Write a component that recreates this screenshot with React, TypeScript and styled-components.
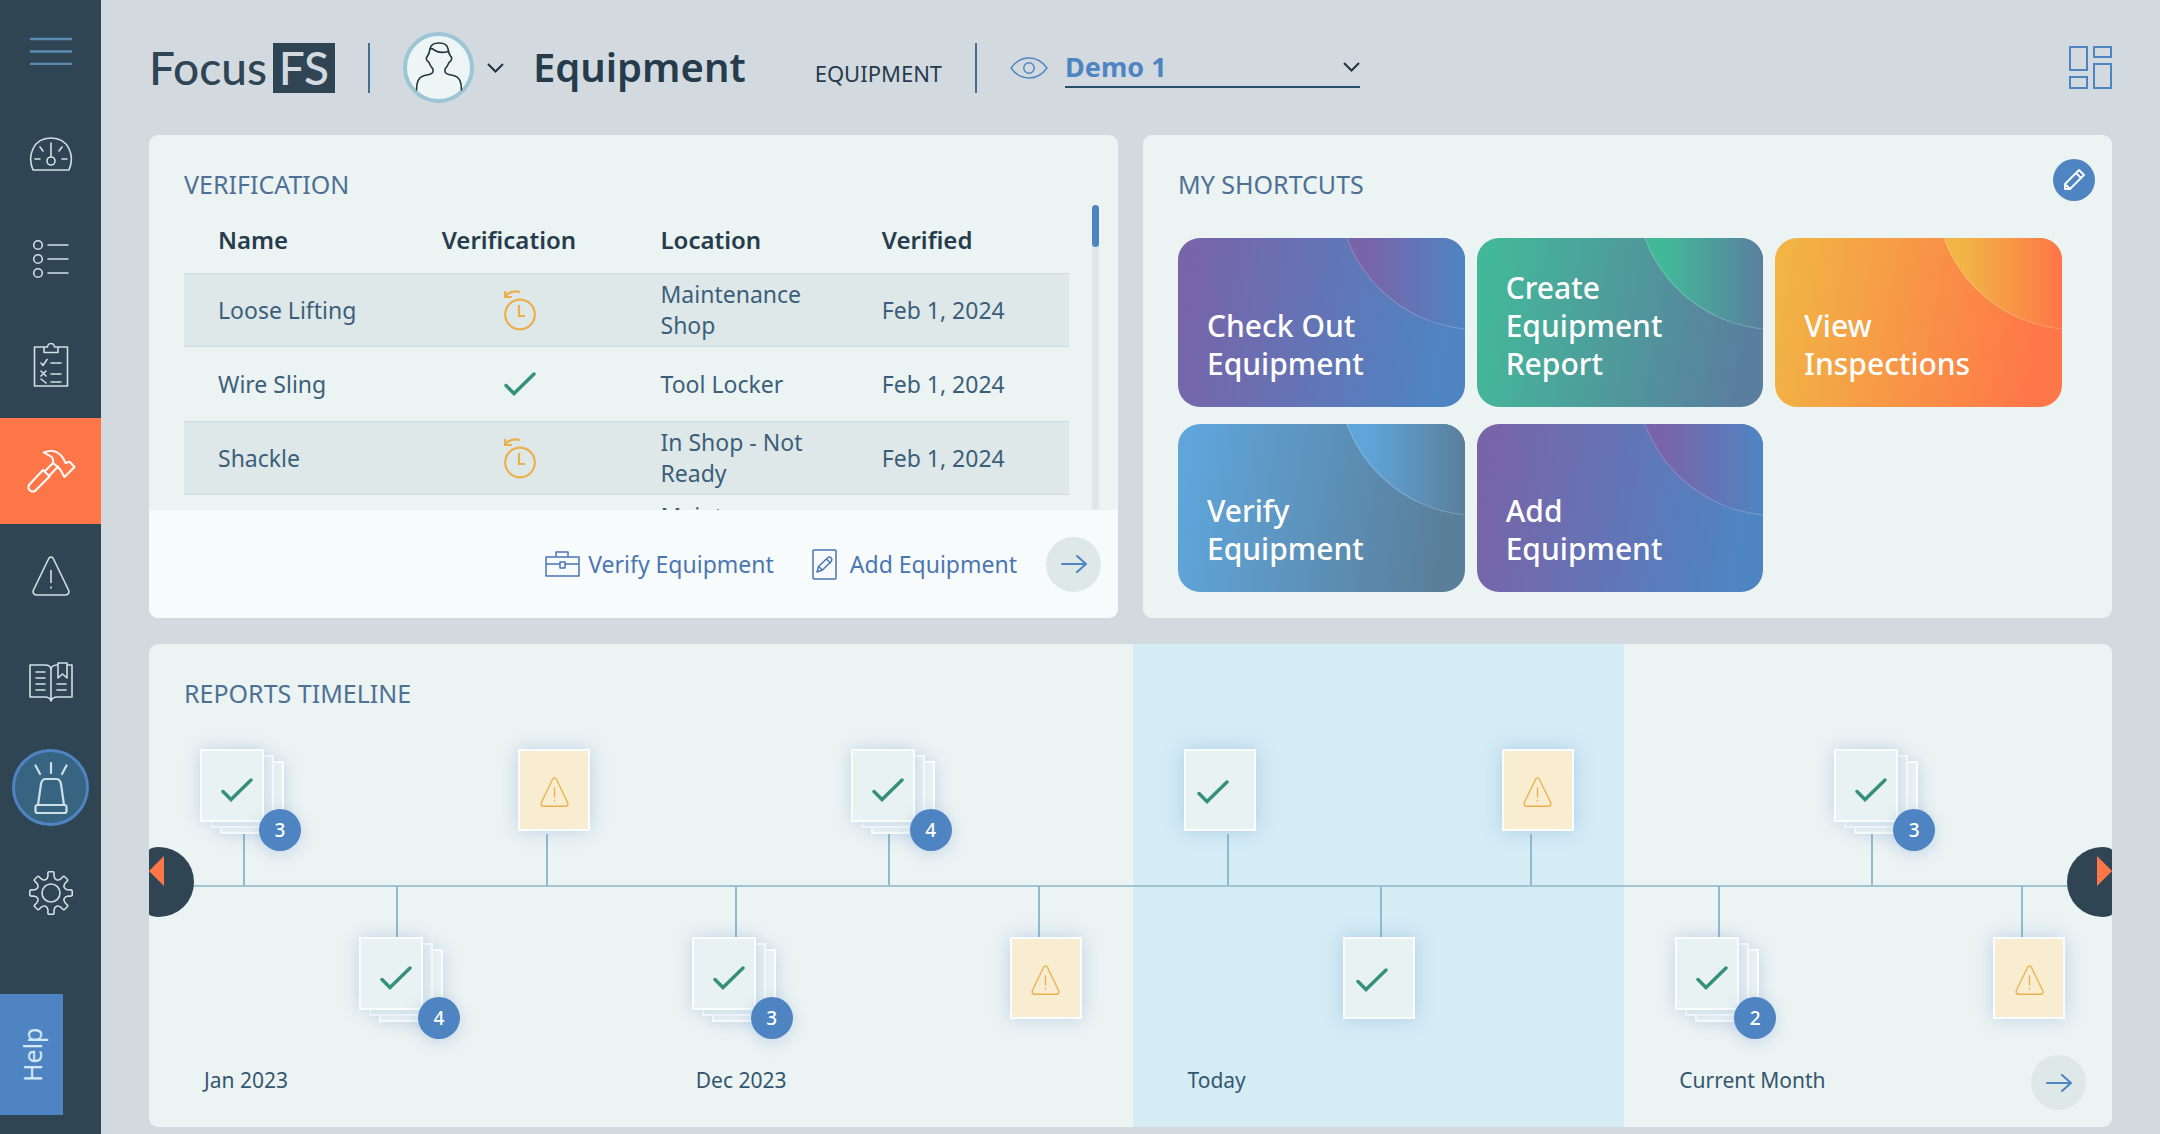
import React from "react";
import styled, { createGlobalStyle, css } from "styled-components";

const color = {
  navy: "#2f4554",
  ink: "#263c4c",
  text: "#3b5f7a",
  heading: "#4d7195",
  blue: "#4f84c2",
  orange: "#ff7748",
  amber: "#ebb04c",
  green: "#35907a",
  page: "#d2dae0",
  card: "#ecf3f3",
  stripe: "#dfe8e9",
  line: "#a0c4d2",
  ice: "#cfdfe8",
};

const GlobalStyle = createGlobalStyle`
  *, *::before, *::after { box-sizing: border-box; }
  body {
    margin: 0;
    background: ${color.page};
    color: ${color.text};
    font-family: "Noto Sans", "Open Sans", sans-serif;
  }
  button, select { font: inherit; color: inherit; }
  button { padding: 0; border: 0; background: none; cursor: pointer; }
  svg { display: block; fill: none; flex: none; }
`;

/* ---------- Shell ---------- */

const Shell = styled.div`
  display: grid;
  grid-template-columns: 101px minmax(0, 1fr);
  min-height: 100vh;
`;

const Sidebar = styled.aside`
  display: flex;
  flex-direction: column;
  background: ${color.navy};
`;

const MenuButton = styled.button`
  display: grid;
  place-items: center;
  height: 101px;
`;

const NavList = styled.nav`
  display: flex;
  flex: 1;
  flex-direction: column;
`;

const NavLink = styled.a<{ $active?: boolean }>`
  display: grid;
  flex: 1;
  place-items: center;
  color: ${(p) => (p.$active ? "#fff" : color.ice)};
  background: ${(p) => (p.$active ? color.orange : "transparent")};
`;

const Beacon = styled.span`
  display: grid;
  place-items: center;
  width: 77px;
  height: 77px;
  border: 3px solid ${color.blue};
  border-radius: 50%;
  background: #376481;
`;

const HelpArea = styled.div`
  height: 188px;
  padding-top: 48px;
`;

const HelpButton = styled.button`
  display: grid;
  place-items: center;
  width: 63px;
  height: 121px;
  background: ${color.blue};
  color: #d3eaf6;
  font-size: 25px;
  line-height: 36px;
  writing-mode: vertical-rl;
  transform: rotate(180deg);
`;

const Main = styled.main`
  display: grid;
  grid-template-rows: 109px repeat(2, minmax(483px, 1fr));
  gap: 26px;
  height: 100vh;
  min-height: 1134px;
  padding: 0 48px 7px;
`;

/* ---------- Header ---------- */

const Header = styled.header`
  display: flex;
  align-items: center;
  padding-top: 26px;
`;

const Logo = styled.div`
  display: flex;
  align-items: center;
  gap: 6px;
  color: ${color.navy};
  font-family: Lato, sans-serif;
  font-size: 46px;
  font-weight: 500;
  line-height: 50px;
`;

const LogoBox = styled.span`
  width: 62px;
  height: 50px;
  background: ${color.navy};
  color: ${color.page};
  text-align: center;
`;

const Divider = styled.span`
  width: 2px;
  height: 50px;
  margin: 0 33px;
  background: #44708f;
`;

const UserButton = styled.button`
  display: flex;
  align-items: center;
  gap: 13px;
`;

const Headline = styled.div`
  display: flex;
  align-items: baseline;
  gap: 69px;
  margin-left: 29px;
  padding-bottom: 2px;
`;

const PageTitle = styled.h1`
  margin: 0;
  color: ${color.ink};
  font-size: 40px;
  font-weight: 600;
  line-height: 54px;
`;

const Crumb = styled.span`
  color: ${color.ink};
  font-size: 22px;
`;

const SiteField = styled.label`
  display: flex;
  align-items: center;
  gap: 17px;
  color: ${color.blue};
`;

const SelectBox = styled.span`
  display: grid;
  width: 295px;
  align-items: center;
  border-bottom: 2px solid #24506a;
  > * { grid-area: 1 / 1; }
  > svg { justify-self: end; pointer-events: none; }
`;

const SiteSelect = styled.select`
  width: 100%;
  height: 38px;
  padding: 0;
  border: 0;
  outline: 0;
  appearance: none;
  background: none;
  font-size: 27px;
  font-weight: 700;
`;

const LayoutButton = styled.button`
  margin-left: auto;
`;

/* ---------- Cards ---------- */

const TopRow = styled.div`
  display: grid;
  grid-template-columns: repeat(2, minmax(0, 1fr));
  gap: 25px;
  min-height: 0;
`;

const Card = styled.section`
  overflow: hidden;
  border-radius: 9px;
  background: ${color.card};
`;

const CardTitle = styled.h2`
  margin: 0;
  color: ${color.heading};
  font-size: 25px;
  font-weight: 400;
  line-height: 34px;
`;

const VerificationCard = styled(Card)`
  display: flex;
  flex-direction: column;
`;

const VerificationBody = styled.div`
  display: flex;
  flex: 1;
  flex-direction: column;
  min-height: 0;
  padding: 32px 19px 0 35px;
  gap: 4px;
`;

const ScrollRow = styled.div`
  display: flex;
  flex: 1;
  gap: 23px;
  min-height: 0;
`;

const TableViewport = styled.div`
  flex: 1;
  height: 100%;
  overflow: hidden;
`;

const ScrollTrack = styled.div`
  width: 7px;
  border-radius: 4px;
  background: ${color.stripe};
`;

const ScrollThumb = styled.div`
  height: 42px;
  border-radius: 4px;
  background: ${color.blue};
`;

const Table = styled.table`
  width: 100%;
  border-collapse: collapse;
  table-layout: fixed;
  font-size: 23px;
  line-height: 31px;
  text-align: left;

  th, td { padding: 0 20px 0 34px; }
  thead tr { height: 68px; }
  th { color: ${color.ink}; font-size: 24px; font-weight: 600; }
  tbody tr { height: 74px; }
  tbody tr:nth-child(odd) {
    background: ${color.stripe};
    box-shadow: inset 0 1px #cfdade, inset 0 -1px #cfdade;
  }
  th:nth-child(2) { padding: 0 14px 0 0; text-align: center; }
  td:nth-child(2) { padding: 0 0 0 8px; }
  td svg { margin: auto; }
`;

const CardFooter = styled.footer`
  display: flex;
  align-items: center;
  justify-content: flex-end;
  height: 108px;
  padding-right: 17px;
  background: #f8fbfc;
  color: #4a76b3;
  font-size: 23px;
`;

const FooterLink = styled.a`
  display: flex;
  align-items: center;
  gap: 8px;
  margin-right: 38px;
  color: inherit;
  text-decoration: none;
  & + & { margin-right: 29px; gap: 13px; }
`;

const RoundButton = styled.button`
  display: grid;
  place-items: center;
  width: 55px;
  height: 55px;
  border-radius: 50%;
  background: ${color.stripe};
  color: ${color.blue};
`;

const ShortcutsCard = styled(Card)`
  padding: 24px 17px 26px 35px;
  display: flex;
  flex-direction: column;
  gap: 37px;
`;

const ShortcutsHead = styled.div`
  display: flex;
  justify-content: space-between;
  align-items: flex-end;
  height: 42px;
`;

const EditButton = styled.button`
  display: grid;
  place-items: center;
  width: 42px;
  height: 42px;
  border-radius: 50%;
  background: ${color.blue};
  color: #fff;
`;

const TileGrid = styled.div`
  display: grid;
  flex: 1;
  grid-template: repeat(2, 1fr) / repeat(3, 1fr);
  gap: 17px 12px;
  margin-right: 33px;
`;

const Tile = styled.button<{ $from: string; $to: string }>`
  position: relative;
  display: flex;
  align-items: flex-end;
  overflow: hidden;
  padding: 0 60px 24px 29px;
  border-radius: 22px;
  background: linear-gradient(100deg, ${(p) => p.$from} 5%, ${(p) => p.$to} 90%);
  color: #fff;
  font-size: 30px;
  font-weight: 500;
  line-height: 38px;
  text-align: left;

  &::before {
    content: "";
    position: absolute;
    top: -188px;
    right: -153px;
    width: 280px;
    height: 280px;
    border: 1px solid rgb(255 255 255 / 22%);
    border-radius: 50%;
    background: linear-gradient(90deg, ${(p) => p.$from} 10%, ${(p) => p.$to} 45%);
  }
`;

/* ---------- Timeline ---------- */

const TimelineCard = styled(Card)`
  display: grid;
  grid-template: minmax(0, 1fr) / minmax(0, 1fr);
  > * { grid-area: 1 / 1; }
  > h2 { margin: 32px 35px; }
`;

const Months = styled.div`
  display: grid;
  grid-template-columns: repeat(4, calc(25% + 1px));
`;

const Month = styled.div<{ $current?: boolean }>`
  display: flex;
  flex-direction: column;
  padding-top: 105px;
  background: ${(p) => (p.$current ? "#d5ecf5" : "transparent")};
`;

const Slots = styled.div`
  display: grid;
  grid-template-columns: repeat(3, 159px);
  height: 274px;
  padding-left: 51px;
  background: linear-gradient(${color.line}, ${color.line}) 0 136px / 100% 2px no-repeat;
`;

const Slot = styled.div<{ $below?: boolean }>`
  display: flex;
  flex-direction: column;
  padding-top: ${(p) => (p.$below ? 137 : 0)}px;
`;

const Stem = styled.span<{ $inset: number }>`
  width: 2px;
  height: 51px;
  margin-left: ${(p) => p.$inset}px;
  background: #8fbccd;
`;

const Report = styled.button`
  position: relative;
  width: 85px;
  height: 85px;
`;

const sheet = css`
  position: absolute;
  border: 2px solid #fafdfd;
  background: #e9f2f2;
`;

const Sheet = styled.span<{ $depth: number }>`
  ${sheet}
  top: ${(p) => p.$depth * 6}px;
  left: ${(p) => p.$depth * 10}px;
  z-index: ${(p) => 3 - p.$depth};
  display: grid;
  place-items: center;
  width: 64px;
  height: 73px;
  padding: 8px 0 0 10px;
  box-shadow: ${(p) => (p.$depth === 1 ? "none" : "0 0 16px rgb(96 140 200 / 30%)")};
`;

const Page = styled.span<{ $warning?: boolean }>`
  ${sheet}
  top: 0;
  left: 0;
  display: flex;
  align-items: center;
  justify-content: ${(p) => (p.$warning ? "center" : "flex-start")};
  width: 72px;
  height: 82px;
  padding: 3px 0 0 ${(p) => (p.$warning ? 0 : 11)}px;
  background: ${(p) => (p.$warning ? "#f8ecd1" : "#e9f2f2")};
  box-shadow: 0 0 18px rgb(90 140 200 / 32%);
`;

const Badge = styled.span`
  position: absolute;
  z-index: 4;
  top: 60px;
  left: 59px;
  width: 42px;
  height: 42px;
  border-radius: 50%;
  background: ${color.blue};
  box-shadow: 0 3px 16px rgb(96 140 200 / 28%);
  color: #fff;
  font-size: 19px;
  font-weight: 500;
  line-height: 42px;
  text-align: center;
`;

const MonthLabel = styled.span`
  margin: 42px 0 0 55px;
  color: #34566f;
  font-size: 21px;
  line-height: 30px;
`;

const Pager = styled.button<{ $side: "left" | "right" }>`
  z-index: 5;
  display: flex;
  justify-content: flex-start;
  justify-self: ${(p) => (p.$side === "left" ? "start" : "end")};
  width: 45px;
  height: 70px;
  margin-top: 203px;
  padding: 9px 0 0 ${(p) => (p.$side === "left" ? 0 : 30)}px;
  border-radius: ${(p) => (p.$side === "left" ? "10px 35px 35px 10px / 3px 35px 35px 3px" : "35px 10px 10px 35px / 35px 3px 3px 35px")};
  background: ${color.navy};
`;

const CornerSlot = styled.div`
  align-self: end;
  justify-self: end;
  margin: 0 26px 17px 0;
`;

/* ---------- Icons ---------- */

const Glyph = ({ w, h = w, sw = 1.6, children }: { w: number; h?: number; sw?: number; children: React.ReactNode }) => (
  <svg width={w} height={h} viewBox={`0 0 ${w} ${h}`} stroke="currentColor" strokeWidth={sw} strokeLinecap="round" strokeLinejoin="round" aria-hidden="true">
    {children}
  </svg>
);

const MenuIcon = () => (
  <svg width="42" height="28" viewBox="0 0 42 28" stroke="#5b8bb2" strokeWidth="2.4" aria-hidden="true">
    <path d="M0 2h42M0 14.5h42M0 27h42" />
  </svg>
);

const GaugeIcon = () => (
  <Glyph w={44} h={34}>
    <path d="M4 33C-2 19 4 1 22 1s24 18 18 32ZM22 6v14M6 22h5M33 22h5M11 10l3 4M33 10l-3 4" />
    <circle cx="22" cy="24" r="4" />
  </Glyph>
);

const ListIcon = () => (
  <Glyph w={36} h={40}>
    <circle cx="5" cy="6" r="4.3" /><circle cx="5" cy="20" r="4.3" /><circle cx="5" cy="34" r="4.3" />
    <path d="M15 6h20M15 20h20M15 34h20" />
  </Glyph>
);

const ClipboardIcon = () => (
  <Glyph w={36} h={44}>
    <path d="M11 4H1.500v39h33V4H25M11 4v5.500h14V4h-3.500a3.500 3.500 0 0 0-7 0ZM8 20l2 2.500 4-6M18 20h10M8 28l5 5m0-5-5 5M18 31h10M8 36l5 4M18 39h10" />
  </Glyph>
);

const HammerIcon = () => (
  <Glyph w={50} h={50} sw={2}>
    <path d="M17.800 6.500C22 4.500 28 4 32 7c3 2 6 6 7.500 10l4-1.300 5 5.300-10 10-4-7-2.700-3L27 17c.500-3 0-5-2-6.500Z" />
    <path d="m27 17-8 8m13-4.500-8.500 9M17 24l6.500 6.500L9 45c-4 2-8-2-6-6Z" />
  </Glyph>
);

const AlertIcon = ({ small }: { small?: boolean }) => (
  <svg width={small ? 29 : 38} height={small ? 30 : 40} viewBox="0 0 38 40" stroke={small ? color.amber : "currentColor"} strokeWidth={small ? 1.8 : 1.6} strokeLinecap="round" strokeLinejoin="round" aria-hidden="true">
    <path d="M16.500 3c1-2.500 4-2.500 5 0L36.500 34c1 2.500 0 5-3 5h-29c-3 0-4-2.500-3-5ZM19 14.500v12M19 31v1" />
  </svg>
);

const BookIcon = () => (
  <Glyph w={44} h={40}>
    <path d="M22 39c-1-3-3-4-6-4H1V3h15c4 0 6 2 6 5 0-3 2-5 6-5h1m9 0h5v32H28c-3 0-5 1-6 4V8M29 1h9v15l-4.500-4-4.500 4ZM7 10h9M7 16h9M7 22h9M7 28h9M28 22h9M28 28h9" />
  </Glyph>
);

const SirenIcon = () => (
  <Glyph w={34} h={54} sw={2.2}>
    <path d="M17 2v10M1.500 4.500 6 13M32.500 4.500 28 13M4 44l3-21c.500-3 2-5 5-5h10c3 0 4.500 2 5 5l3 21" />
    <rect x="1.500" y="44" width="31" height="8" rx="2" />
  </Glyph>
);

const gearPath = (() => {
  const pts: string[] = [];
  for (let i = 0; i < 8; i++) {
    const at = (deg: number, r: number) => {
      const a = ((i * 45 + deg - 90) * Math.PI) / 180;
      return `${(22 + r * Math.cos(a)).toFixed(1)} ${(22 + r * Math.sin(a)).toFixed(1)}`;
    };
    pts.push(`${i ? "L" : "M"}${at(-9, 20)}Q${at(-8, 21.5)} ${at(-5, 21.3)}L${at(5, 21.3)}Q${at(8, 21.5)} ${at(9, 20)}L${at(10, 17.5)}C${at(15, 13.5)} ${at(30, 13.5)} ${at(35, 17.5)}`);
  }
  return pts.join("") + "Z";
})();

const GearIcon = () => (
  <Glyph w={44}>
    <path d={gearPath} />
    <circle cx="22" cy="22" r="9" />
  </Glyph>
);

const AvatarIcon = () => (
  <svg width="71" height="71" viewBox="0 0 71 71" aria-hidden="true">
    <circle cx="35.500" cy="35.500" r="33.500" fill="#eef5f5" stroke="#9cc5d6" strokeWidth="4" />
    <g stroke="#22343f" strokeWidth="1.600" strokeLinecap="round" strokeLinejoin="round">
      <path d="M13.500 58c0-8 1.500-12.500 6.500-14 5-1.500 10-1.500 10-4.500V37c-2-2-3-4-4-6.500-3-2-3.500-5-1.500-6.500 1.500-2 2-4 2.500-7 .500-4 4-6 9-6s8.500 2 9 6c.500 3 1 5 2.500 7 2 1.500 1.500 4.500-1.500 6.500-1 2.500-2 4.500-4 6.500v2.500c0 3 5 3 10 4.500s6.500 6 6.500 14" />
      <path d="M27 17c2-1 3-.500 4 1 4 2.500 9 3 14 1.500" />
    </g>
  </svg>
);

const Chevron = () => (
  <svg width="17" height="10" viewBox="0 0 17 10" stroke="#22343f" strokeWidth="2" aria-hidden="true">
    <path d="m1 1 7.500 7.500L16 1" />
  </svg>
);

const EyeIcon = () => (
  <Glyph w={38} h={22} sw={1.4}>
    <path d="M1 11C6 4 12 1 19 1s13 3 18 10c-5 7-11 10-18 10S6 18 1 11Z" />
    <circle cx="19" cy="11" r="5.200" />
  </Glyph>
);

const LayoutIcon = () => (
  <svg width="43" height="43" viewBox="0 0 43 43" stroke={color.blue} strokeWidth="2" aria-hidden="true">
    <path d="M1 1h17v23H1ZM25 1h17v10H25ZM1 31h17v11H1ZM25 18h17v24H25Z" />
  </svg>
);

const ClockBackIcon = () => (
  <svg width="32" height="42" viewBox="0 0 32 42" stroke={color.amber} strokeWidth="2.200" aria-hidden="true">
    <circle cx="16" cy="25.500" r="14.800" />
    <path d="M15 16v11h6M1 2v6h7M1.500 7C5 3 10 1.500 16 3" />
  </svg>
);

const CheckIcon = () => (
  <svg width="32" height="24" viewBox="0 0 32 24" stroke={color.green} strokeWidth="3.400" strokeLinecap="round" aria-hidden="true">
    <path d="m2 13.500 8 8L30 2" />
  </svg>
);

const CaseIcon = () => (
  <Glyph w={35} h={26} sw={1.5}>
    <path d="M1 6h33v19H1ZM11 6V1h12v5M1 13h14m5 0h14M15 11h5v6h-5Z" />
  </Glyph>
);

const FormIcon = () => (
  <Glyph w={25} h={31} sw={1.5}>
    <rect x="1" y="1" width="23" height="29" rx="1" />
    <path d="m5 23 1.500-5.500L16 8.500c2-1.500 5 1 3.500 3.500L10.500 21ZM14.500 10l4 4M6.500 17.500l4 3.500" />
  </Glyph>
);

const PencilIcon = () => (
  <Glyph w={22} h={22} sw={1.8}>
    <path d="M2 20v-5L16 1l5 5L7 20ZM13 4l5 5M2.500 15.500 7 20" />
  </Glyph>
);

const ArrowIcon = () => (
  <Glyph w={26} h={18} sw={2}>
    <path d="M1 9h24M16 1l9 8-9 8" />
  </Glyph>
);

const Triangle = ({ side }: { side: "left" | "right" }) => (
  <svg width="15" height="30" viewBox="0 0 15 30" aria-hidden="true">
    <path d={side === "left" ? "M15 0v30L0 15Z" : "M0 0v30l15-15Z"} fill={color.orange} />
  </svg>
);

/* ---------- Data ---------- */

const navItems = [
  { label: "Dashboard", icon: <GaugeIcon /> },
  { label: "Tasks", icon: <ListIcon /> },
  { label: "Forms", icon: <ClipboardIcon /> },
  { label: "Equipment", icon: <HammerIcon />, active: true },
  { label: "Hazards", icon: <AlertIcon /> },
  { label: "Library", icon: <BookIcon /> },
  { label: "Emergency", icon: <Beacon><SirenIcon /></Beacon> },
  { label: "Settings", icon: <GearIcon /> },
];

const rows = [
  { name: "Loose Lifting", ok: false, location: "Maintenance Shop", date: "Feb 1, 2024" },
  { name: "Wire Sling", ok: true, location: "Tool Locker", date: "Feb 1, 2024" },
  { name: "Shackle", ok: false, location: "In Shop - Not Ready", date: "Feb 1, 2024" },
  { name: "", ok: null, location: "Maintenance Shop", date: "" },
];

const purple = ["#7864a9", "#4f84c2"];
const shortcuts = [
  { label: "Check Out Equipment", tone: purple },
  { label: "Create Equipment Report", tone: ["#43b899", "#5a7f9e"] },
  { label: "View Inspections", tone: ["#f1b445", "#ff7648"] },
  { label: "Verify Equipment", tone: ["#5fa5da", "#5a7f9b"] },
  { label: "Add Equipment", tone: purple },
];

type Kind = "ok" | "warning" | number;
const months: { label: string; current?: boolean; reports: Kind[] }[] = [
  { label: "Jan 2023", reports: [3, 4, "warning"] },
  { label: "Dec 2023", reports: [3, 4, "warning"] },
  { label: "Today", current: true, reports: ["ok", "ok", "warning"] },
  { label: "Current Month", reports: [2, 3, "warning"] },
];
const stemInsets = [43, 37, 28];

const ReportItem = ({ kind }: { kind: Kind }) => (
  <Report aria-label={kind === "warning" ? "Report with warning" : "Reports"}>
    {typeof kind === "number" ? (
      <>
        <Sheet $depth={2} />
        <Sheet $depth={1} />
        <Sheet $depth={0}><CheckIcon /></Sheet>
        <Badge>{kind}</Badge>
      </>
    ) : (
      <Page $warning={kind === "warning"}>
        {kind === "warning" ? <AlertIcon small /> : <CheckIcon />}
      </Page>
    )}
  </Report>
);

export default function App() {
  return (
    <>
      <GlobalStyle />
      <Shell>
        <Sidebar>
          <MenuButton aria-label="Menu"><MenuIcon /></MenuButton>
          <NavList>
            {navItems.map((item) => (
              <NavLink key={item.label} href="#" $active={item.active} aria-label={item.label}>
                {item.icon}
              </NavLink>
            ))}
          </NavList>
          <HelpArea><HelpButton>Help</HelpButton></HelpArea>
        </Sidebar>

        <Main>
          <Header>
            <Logo>Focus<LogoBox>FS</LogoBox></Logo>
            <Divider />
            <UserButton aria-label="Account"><AvatarIcon /><Chevron /></UserButton>
            <Headline>
              <PageTitle>Equipment</PageTitle>
              <Crumb>EQUIPMENT</Crumb>
            </Headline>
            <Divider />
            <SiteField>
              <EyeIcon />
              <SelectBox>
                <SiteSelect aria-label="Site" defaultValue="demo-1">
                  <option value="demo-1">Demo 1</option>
                </SiteSelect>
                <Chevron />
              </SelectBox>
            </SiteField>
            <LayoutButton aria-label="Layout"><LayoutIcon /></LayoutButton>
          </Header>

          <TopRow>
            <VerificationCard>
              <VerificationBody>
                <CardTitle>VERIFICATION</CardTitle>
                <ScrollRow>
                  <TableViewport>
                    <Table>
                      <thead>
                        <tr><th>Name</th><th>Verification</th><th>Location</th><th>Verified</th></tr>
                      </thead>
                      <tbody>
                        {rows.map((row, i) => (
                          <tr key={i}>
                            <td>{row.name}</td>
                            <td>{row.ok === null ? null : row.ok ? <CheckIcon /> : <ClockBackIcon />}</td>
                            <td>{row.location}</td>
                            <td>{row.date}</td>
                          </tr>
                        ))}
                      </tbody>
                    </Table>
                  </TableViewport>
                  <ScrollTrack><ScrollThumb /></ScrollTrack>
                </ScrollRow>
              </VerificationBody>
              <CardFooter>
                <FooterLink href="#"><CaseIcon />Verify Equipment</FooterLink>
                <FooterLink href="#"><FormIcon />Add Equipment</FooterLink>
                <RoundButton aria-label="All equipment"><ArrowIcon /></RoundButton>
              </CardFooter>
            </VerificationCard>

            <ShortcutsCard>
              <ShortcutsHead>
                <CardTitle>MY SHORTCUTS</CardTitle>
                <EditButton aria-label="Edit shortcuts"><PencilIcon /></EditButton>
              </ShortcutsHead>
              <TileGrid>
                {shortcuts.map((s) => (
                  <Tile key={s.label} $from={s.tone[0]} $to={s.tone[1]}>{s.label}</Tile>
                ))}
              </TileGrid>
            </ShortcutsCard>
          </TopRow>

          <TimelineCard>
            <Months>
              {months.map((month, m) => (
                <Month key={month.label} $current={month.current}>
                  <Slots>
                    {month.reports.map((kind, i) => {
                      const below = (m * 3 + i) % 2 === 1;
                      const stem = <Stem $inset={stemInsets[i]} />;
                      return (
                        <Slot key={i} $below={below}>
                          {below && stem}
                          <ReportItem kind={kind} />
                          {!below && stem}
                        </Slot>
                      );
                    })}
                  </Slots>
                  <MonthLabel>{month.label}</MonthLabel>
                </Month>
              ))}
            </Months>
            <CardTitle>REPORTS TIMELINE</CardTitle>
            <Pager $side="left" aria-label="Earlier"><Triangle side="left" /></Pager>
            <Pager $side="right" aria-label="Later"><Triangle side="right" /></Pager>
            <CornerSlot>
              <RoundButton aria-label="All reports"><ArrowIcon /></RoundButton>
            </CornerSlot>
          </TimelineCard>
        </Main>
      </Shell>
    </>
  );
}
